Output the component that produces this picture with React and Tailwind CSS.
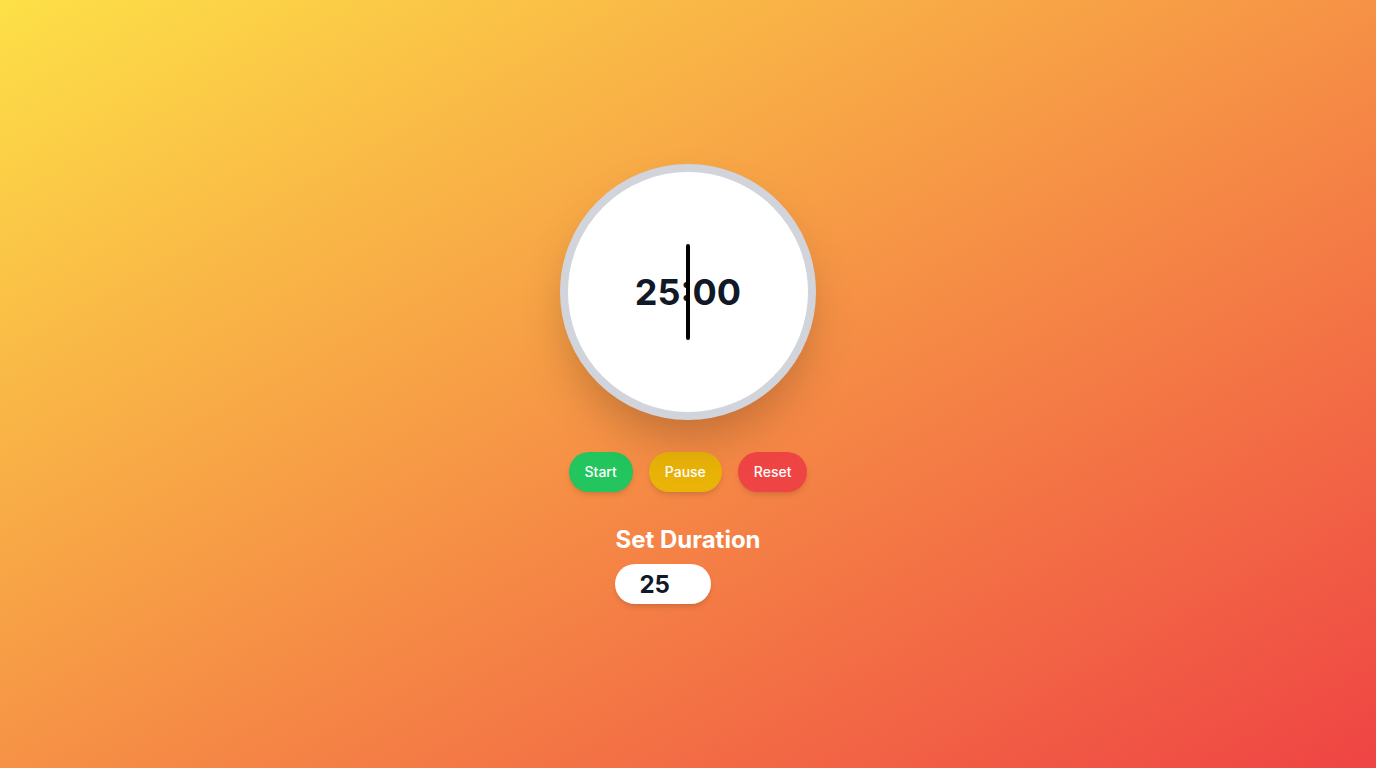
import React from "react";

export default function App() {
  return (
    <div
      className="min-h-screen w-full flex flex-col items-center justify-center bg-linear-to-br/srgb from-[#fde047] to-[#ef4444]"
      style={{ fontFamily: "Inter, 'Noto Sans', sans-serif" }}
    >
      <div className="relative w-64 h-64 rounded-full border-8 border-[#d1d5db] bg-white shadow-2xl flex items-center justify-center">
        <span className="text-4xl font-bold text-[#111827]">25:00</span>
        <div className="absolute left-1/2 top-1/2 w-1 h-24 -translate-x-1/2 -translate-y-1/2 rounded-full bg-black"></div>
      </div>

      <div className="mt-8 flex gap-4">
        <button className="px-4 py-2.5 rounded-full bg-[#22c55e] text-white text-sm font-medium shadow-md">
          Start
        </button>
        <button className="px-4 py-2.5 rounded-full bg-[#eab308] text-white text-sm font-medium shadow-md">
          Pause
        </button>
        <button className="px-4 py-2.5 rounded-full bg-[#ef4444] text-white text-sm font-medium shadow-md">
          Reset
        </button>
      </div>

      <div className="mt-8 flex flex-col">
        <h2 className="text-2xl font-bold text-white mb-2">Set Duration</h2>
        <input
          type="text"
          defaultValue="25"
          className="w-24 h-10 rounded-full bg-white pl-6 text-2xl font-bold text-[#111827] shadow-md outline-none"
        />
      </div>
    </div>
  );
}
